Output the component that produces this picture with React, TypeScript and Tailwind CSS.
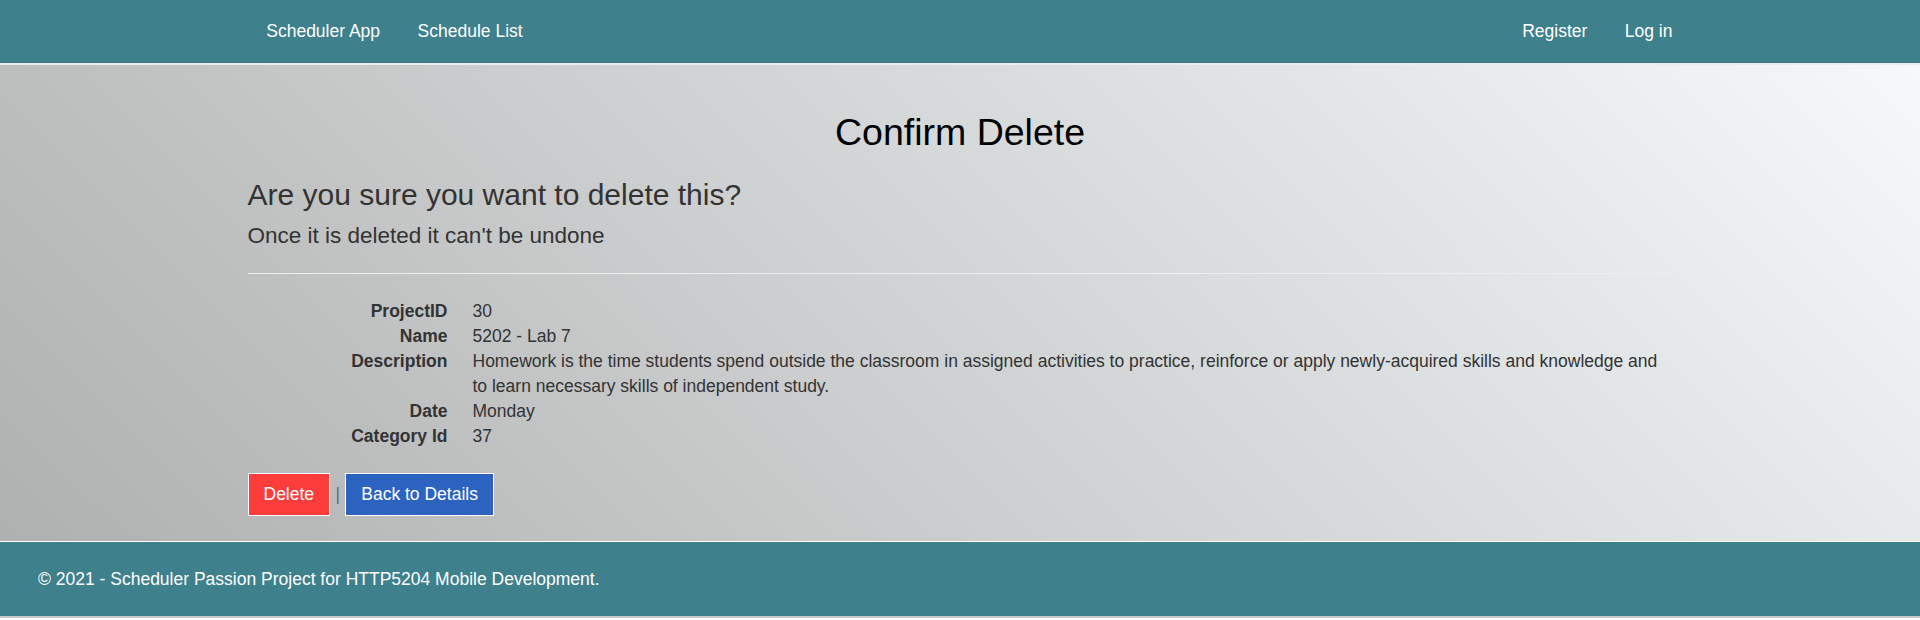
import React from 'react';

interface Field {
  label: string;
  value: string;
}

const fields: Field[] = [
  { label: 'ProjectID', value: '30' },
  { label: 'Name', value: '5202 - Lab 7' },
  {
    label: 'Description',
    value:
      'Homework is the time students spend outside the classroom in assigned activities to practice, reinforce or apply newly-acquired skills and knowledge and to learn necessary skills of independent study.',
  },
  { label: 'Date', value: 'Monday' },
  { label: 'Category Id', value: '37' },
];

const NavLink: React.FC<{ children: React.ReactNode }> = ({ children }) => (
  <a href="#" className="block px-[18.75px] py-[18.75px] leading-[25px] text-white">
    {children}
  </a>
);

const App: React.FC = () => {
  return (
    <div className="w-[1920px] text-[17.5px] text-[#333] font-['Liberation_Sans',Arial,sans-serif]">
      {/* Top navbar */}
      <nav className="h-[65px] bg-[#3e808c] border-b-2 border-[#ececec]">
        <div className="mx-auto w-[1462.5px] px-[18.75px] flex justify-between">
          <ul className="flex">
            <li><NavLink>Scheduler App</NavLink></li>
            <li><NavLink>Schedule List</NavLink></li>
          </ul>
          <ul className="flex mr-[-18.75px]">
            <li><NavLink>Register</NavLink></li>
            <li><NavLink>Log in</NavLink></li>
          </ul>
        </div>
      </nav>

      {/* Main */}
      <main className="bg-linear-45 from-[#afb0b0] to-[#f5f9fb]">
        <div className="mx-auto w-[1462.5px] px-[18.75px] pt-[47px] pb-[25px]">
          <h2 className="text-center text-[37.5px] leading-[41px] text-black">Confirm Delete</h2>
          <h3 className="mt-[25px] text-[30px] leading-[33px]">Are you sure you want to delete this?</h3>
          <h4 className="mt-[12.5px] text-[22.5px] leading-[24.75px]">Once it is deleted it can't be undone</h4>
          <hr className="mt-[25px] mb-[25px] border-t border-[#eeeeee]" />

          <dl className="mb-[24px] leading-[25px]">
            {fields.map((field) => (
              <div key={field.label} className="flex">
                <dt className="w-[200px] shrink-0 text-right font-bold">{field.label}</dt>
                <dd className="ml-[25px] flex-1">{field.value}</dd>
              </div>
            ))}
          </dl>

          <div className="flex items-center">
            <button className="h-[42.5px] px-[15px] border border-white bg-[#fd3c3c] text-white leading-[25px]">
              Delete
            </button>
            <span className="px-[5.3px] text-[#6b6b6b]">|</span>
            <button className="h-[42.5px] px-[15px] border border-white bg-[#2c62c0] text-white leading-[25px]">
              Back to Details
            </button>
          </div>
        </div>
      </main>

      {/* Footer */}
      <footer className="border-t border-white bg-[#3e808c] h-[75px] pt-[25px] pl-[38px] text-white leading-[25px]">
        © 2021 - Scheduler Passion Project for HTTP5204 Mobile Development.
      </footer>
      <div className="h-[2px] bg-[#c9c9c9]" />
    </div>
  );
};

export default App;
